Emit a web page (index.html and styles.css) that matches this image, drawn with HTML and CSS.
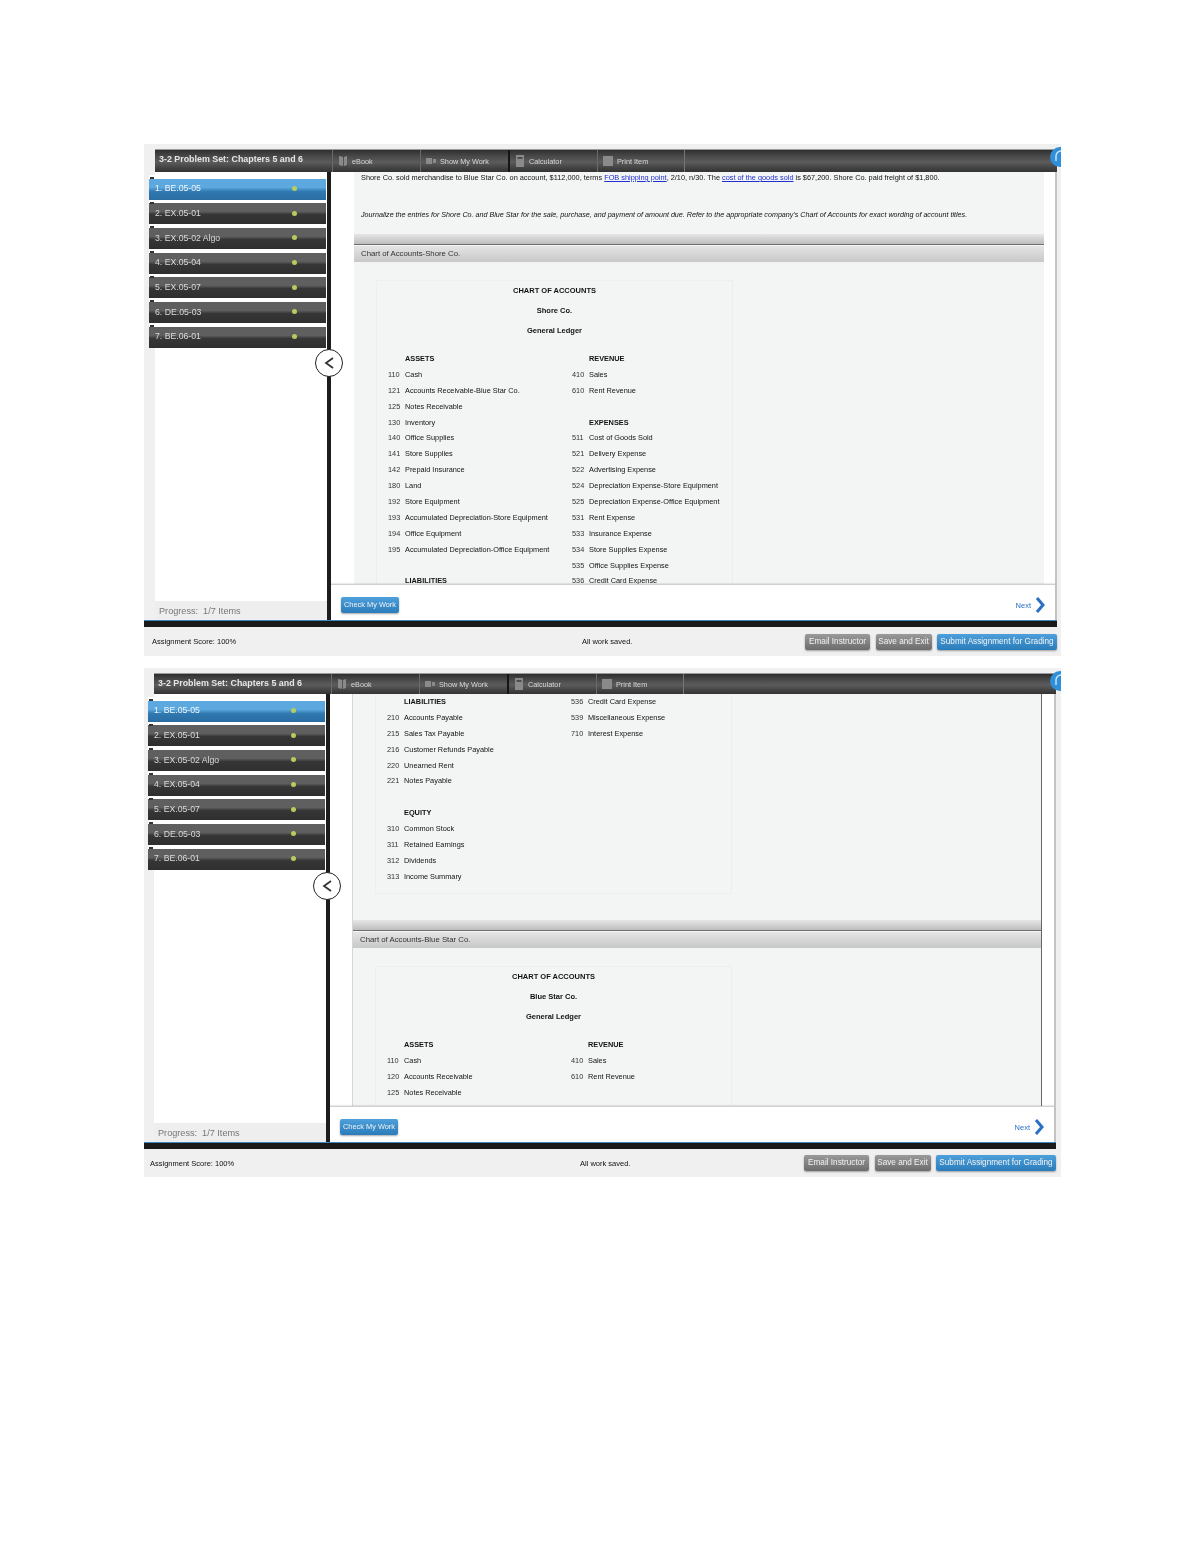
FILE: index.html
```html
<!DOCTYPE html>
<html lang="en">
<head>
<meta charset="utf-8">
<title>3-2 Problem Set: Chapters 5 and 6</title>
<link rel="stylesheet" href="styles.css">
</head>
<body>
<section class="panel panel-first">
  <svg class="help" viewBox="0 0 20 20"><circle cx="10" cy="10" r="10" fill="#2f8fd8"/><path d="M6 14V9a5 5 0 0 1 10 0" fill="none" stroke="#cfe6f7" stroke-width="1.4"/></svg>
  <header class="topbar">
    <h1 class="title">3-2 Problem Set: Chapters 5 and 6</h1>
    <div class="tool"><svg class="tool-icon" viewBox="0 0 10 12"><path d="M1 1l4 1v9l-4-1zM6 2l3-1v9l-3 1z" fill="#8a8a8a"/></svg>eBook</div>
    <div class="tool tool-dark"><svg class="tool-icon" viewBox="0 0 10 12"><path d="M0 3h6v6H0zM7 4h3v4H7z" fill="#8a8a8a"/></svg>Show My Work</div>
    <div class="tool"><svg class="tool-icon" viewBox="0 0 10 12"><path fill-rule="evenodd" d="M1 0h8v12H1zM2.500 2v2h5V2z" fill="#8a8a8a"/></svg>Calculator</div>
    <div class="tool tool-dark"><svg class="tool-icon" viewBox="0 0 10 12"><path d="M0 1h10v10H0z" fill="#8a8a8a"/></svg>Print Item</div>
  </header>
  <div class="workspace">
    <aside class="sidebar">
      <ol class="items">
        <li class="item item-active"><span>1. BE.05-05</span><i class="dot"></i></li>
        <li class="item"><span>2. EX.05-01</span><i class="dot"></i></li>
        <li class="item"><span>3. EX.05-02 Algo</span><i class="dot"></i></li>
        <li class="item"><span>4. EX.05-04</span><i class="dot"></i></li>
        <li class="item"><span>5. EX.05-07</span><i class="dot"></i></li>
        <li class="item"><span>6. DE.05-03</span><i class="dot"></i></li>
        <li class="item"><span>7. BE.06-01</span><i class="dot"></i></li>
      </ol>
      <div class="progress">Progress:&nbsp; 1/7 Items</div>
    </aside>
    <div class="divider">
      <button class="collapse" aria-label="Collapse"><svg viewBox="0 0 12 14" width="12" height="14"><path d="M10 2L3 7l7 5" fill="none" stroke="#333" stroke-width="1.800"/></svg></button>
    </div>
    <main class="main">
      <div class="viewport">
        <div class="doc">
          <p class="para">Shore Co. sold merchandise to Blue Star Co. on account, $112,000, terms <a href="#">FOB shipping point</a>, 2/10, n/30. The <a href="#">cost of the goods sold</a> is $67,200. Shore Co. paid freight of $1,800.</p>
          <p class="para para-italic">Journalize the entries for Shore Co. and Blue Star for the sale, purchase, and payment of amount due. Refer to the appropriate company's Chart of Accounts for exact wording of account titles.</p>
          <div class="rule"></div>
          <h2 class="section">Chart of Accounts-Shore Co.</h2>
          <div class="chart">
            <div class="chart-head"><b>CHART OF ACCOUNTS</b><b>Shore Co.</b><b>General Ledger</b></div>
            <div class="cols">
              <div class="col col-left">
                <div class="row row-head">ASSETS</div>
                <div class="row"><span class="no">110</span>Cash</div>
                <div class="row"><span class="no">121</span>Accounts Receivable-Blue Star Co.</div>
                <div class="row"><span class="no">125</span>Notes Receivable</div>
                <div class="row"><span class="no">130</span>Inventory</div>
                <div class="row"><span class="no">140</span>Office Supplies</div>
                <div class="row"><span class="no">141</span>Store Supplies</div>
                <div class="row"><span class="no">142</span>Prepaid Insurance</div>
                <div class="row"><span class="no">180</span>Land</div>
                <div class="row"><span class="no">192</span>Store Equipment</div>
                <div class="row"><span class="no">193</span>Accumulated Depreciation-Store Equipment</div>
                <div class="row"><span class="no">194</span>Office Equipment</div>
                <div class="row"><span class="no">195</span>Accumulated Depreciation-Office Equipment</div>
                <div class="row"></div>
                <div class="row row-head">LIABILITIES</div>
              </div>
              <div class="col">
                <div class="row row-head">REVENUE</div>
                <div class="row"><span class="no">410</span>Sales</div>
                <div class="row"><span class="no">610</span>Rent Revenue</div>
                <div class="row"></div>
                <div class="row row-head">EXPENSES</div>
                <div class="row"><span class="no">511</span>Cost of Goods Sold</div>
                <div class="row"><span class="no">521</span>Delivery Expense</div>
                <div class="row"><span class="no">522</span>Advertising Expense</div>
                <div class="row"><span class="no">524</span>Depreciation Expense-Store Equipment</div>
                <div class="row"><span class="no">525</span>Depreciation Expense-Office Equipment</div>
                <div class="row"><span class="no">531</span>Rent Expense</div>
                <div class="row"><span class="no">533</span>Insurance Expense</div>
                <div class="row"><span class="no">534</span>Store Supplies Expense</div>
                <div class="row"><span class="no">535</span>Office Supplies Expense</div>
                <div class="row"><span class="no">536</span>Credit Card Expense</div>
              </div>
            </div>
          </div>
        </div>
      </div>
      <div class="actions">
        <button class="btn btn-blue">Check My Work</button>
        <a class="next" href="#">Next<svg viewBox="0 0 10 16" width="10" height="16"><path d="M2 1l6 7-6 7" fill="none" stroke="#2a70c4" stroke-width="3"/></svg></a>
      </div>
    </main>
  </div>
  <div class="rail"></div>
  <footer class="foot">
    <span>Assignment Score: 100%</span>
    <span>All work saved.</span>
    <div class="foot-btns">
      <button class="btn btn-gray btn-email">Email Instructor</button>
      <button class="btn btn-gray btn-save">Save and Exit</button>
      <button class="btn btn-blue btn-submit">Submit Assignment for Grading</button>
    </div>
  </footer>
</section>

<section class="panel panel-second">
  <svg class="help" viewBox="0 0 20 20"><circle cx="10" cy="10" r="10" fill="#2f8fd8"/><path d="M6 14V9a5 5 0 0 1 10 0" fill="none" stroke="#cfe6f7" stroke-width="1.4"/></svg>
  <header class="topbar">
    <h1 class="title">3-2 Problem Set: Chapters 5 and 6</h1>
    <div class="tool"><svg class="tool-icon" viewBox="0 0 10 12"><path d="M1 1l4 1v9l-4-1zM6 2l3-1v9l-3 1z" fill="#8a8a8a"/></svg>eBook</div>
    <div class="tool tool-dark"><svg class="tool-icon" viewBox="0 0 10 12"><path d="M0 3h6v6H0zM7 4h3v4H7z" fill="#8a8a8a"/></svg>Show My Work</div>
    <div class="tool"><svg class="tool-icon" viewBox="0 0 10 12"><path fill-rule="evenodd" d="M1 0h8v12H1zM2.500 2v2h5V2z" fill="#8a8a8a"/></svg>Calculator</div>
    <div class="tool"><svg class="tool-icon" viewBox="0 0 10 12"><path d="M0 1h10v10H0z" fill="#8a8a8a"/></svg>Print Item</div>
  </header>
  <div class="workspace">
    <aside class="sidebar">
      <ol class="items">
        <li class="item item-active"><span>1. BE.05-05</span><i class="dot"></i></li>
        <li class="item"><span>2. EX.05-01</span><i class="dot"></i></li>
        <li class="item"><span>3. EX.05-02 Algo</span><i class="dot"></i></li>
        <li class="item"><span>4. EX.05-04</span><i class="dot"></i></li>
        <li class="item"><span>5. EX.05-07</span><i class="dot"></i></li>
        <li class="item"><span>6. DE.05-03</span><i class="dot"></i></li>
        <li class="item"><span>7. BE.06-01</span><i class="dot"></i></li>
      </ol>
      <div class="progress">Progress:&nbsp; 1/7 Items</div>
    </aside>
    <div class="divider">
      <button class="collapse" aria-label="Collapse"><svg viewBox="0 0 12 14" width="12" height="14"><path d="M10 2L3 7l7 5" fill="none" stroke="#333" stroke-width="1.800"/></svg></button>
    </div>
    <main class="main">
      <div class="viewport">
        <div class="doc">
          <div class="chart chart-continued">
            <div class="cols">
              <div class="col col-left">
                <div class="row row-head">LIABILITIES</div>
                <div class="row"><span class="no">210</span>Accounts Payable</div>
                <div class="row"><span class="no">215</span>Sales Tax Payable</div>
                <div class="row"><span class="no">216</span>Customer Refunds Payable</div>
                <div class="row"><span class="no">220</span>Unearned Rent</div>
                <div class="row"><span class="no">221</span>Notes Payable</div>
                <div class="row"></div>
                <div class="row row-head">EQUITY</div>
                <div class="row"><span class="no">310</span>Common Stock</div>
                <div class="row"><span class="no">311</span>Retained Earnings</div>
                <div class="row"><span class="no">312</span>Dividends</div>
                <div class="row"><span class="no">313</span>Income Summary</div>
              </div>
              <div class="col">
                <div class="row"><span class="no">536</span>Credit Card Expense</div>
                <div class="row"><span class="no">539</span>Miscellaneous Expense</div>
                <div class="row"><span class="no">710</span>Interest Expense</div>
              </div>
            </div>
          </div>
          <div class="rule"></div>
          <h2 class="section">Chart of Accounts-Blue Star Co.</h2>
          <div class="chart">
            <div class="chart-head"><b>CHART OF ACCOUNTS</b><b>Blue Star Co.</b><b>General Ledger</b></div>
            <div class="cols">
              <div class="col col-left">
                <div class="row row-head">ASSETS</div>
                <div class="row"><span class="no">110</span>Cash</div>
                <div class="row"><span class="no">120</span>Accounts Receivable</div>
                <div class="row"><span class="no">125</span>Notes Receivable</div>
                <div class="row"><span class="no">130</span>Inventory</div>
              </div>
              <div class="col">
                <div class="row row-head">REVENUE</div>
                <div class="row"><span class="no">410</span>Sales</div>
                <div class="row"><span class="no">610</span>Rent Revenue</div>
                <div class="row"></div>
                <div class="row row-head">EXPENSES</div>
              </div>
            </div>
          </div>
        </div>
      </div>
      <div class="actions">
        <button class="btn btn-blue">Check My Work</button>
        <a class="next" href="#">Next<svg viewBox="0 0 10 16" width="10" height="16"><path d="M2 1l6 7-6 7" fill="none" stroke="#2a70c4" stroke-width="3"/></svg></a>
      </div>
    </main>
  </div>
  <div class="rail"></div>
  <footer class="foot">
    <span>Assignment Score: 100%</span>
    <span>All work saved.</span>
    <div class="foot-btns">
      <button class="btn btn-gray btn-email">Email Instructor</button>
      <button class="btn btn-gray btn-save">Save and Exit</button>
      <button class="btn btn-blue btn-submit">Submit Assignment for Grading</button>
    </div>
  </footer>
</section>
```

FILE: styles.css
```css
* { box-sizing: border-box; }

html, body { margin: 0; background: #fff; }

body {
  height: 1553px;
  padding: 144px 0 0 144px;
  font-family: "Liberation Sans", Arial, sans-serif;
  color: #111;
  overflow: hidden;
}

.panel {
  position: relative;
  width: 917px;
  padding: 5px 4px 0 11px;
  background: #f0f0f0;
  overflow: hidden;
  filter: blur(0.6px);
}

.panel-second {
  margin-top: 12px;
  padding-left: 10px;
  padding-right: 5px;
}

.help {
  position: absolute;
  top: 3px;
  right: -9px;
  width: 20px;
  height: 20px;
  z-index: 3;
}

/* top bar */
.topbar {
  display: flex;
  height: 23px;
  color: #e6e6e6;
  background: linear-gradient(#2f2f2f, #4a4a4a 30%, #5c5c5c 55%, #3f3f3f 85%, #343434);
  border-top: 1px solid #9a9a9a;
}

.panel-second .topbar { height: 21px; }

.title {
  width: 177px;
  margin: 0;
  padding: 0 0 0 4px;
  font-size: 8.9px;
  font-weight: 700;
  line-height: 18px;
  white-space: nowrap;
}

.tool {
  display: flex;
  align-items: center;
  gap: 4px;
  width: 88px;
  padding-left: 5px;
  font-size: 7.3px;
  color: #d8d8d8;
  border-left: 1px solid #6a6a6a;
}

.tool:nth-of-type(3) { width: 89px; }

.tool-dark + .tool { border-left: 2px solid #151515; }

.tool-dark:last-child { border-right: 2px solid #151515; }

.tool:last-child { border-right: 1px solid #777; }

.tool-icon { width: 10px; height: 12px; flex: none; }

/* workspace */
.workspace {
  display: flex;
  height: 448px;
}

.sidebar {
  display: flex;
  flex-direction: column;
  justify-content: space-between;
  width: 172px;
  background: #fff;
}

.items {
  margin: 3px 0 0 -6px;
  padding: 0;
  width: 177px;
  list-style: none;
}

.item {
  position: relative;
  display: flex;
  align-items: center;
  justify-content: space-between;
  height: 24.7px;
  padding: 3px 29px 1px 6px;
  font-size: 8.7px;
  color: #dcdcdc;
  background: linear-gradient(#5f5f5f, #5f5f5f 40%, #363636 55%, #2f2f2f) no-repeat 0 3.7px / 100% 21px #fff;
}

.item::before {
  content: "";
  position: absolute;
  top: 2px;
  left: 1px;
  width: 4px;
  height: 2px;
  background: #333;
}

.item-active {
  color: #f2f7fb;
  background: linear-gradient(#5da8df, #5da8df 40%, #2f78b0 60%, #2a6da3) no-repeat 0 3.7px / 100% 21px #fff;
}

.dot {
  width: 5px;
  height: 5px;
  border-radius: 50%;
  background: #b6cc5c;
}

.progress {
  height: 19px;
  padding: 3px 0 0 4px;
  font-size: 9.15px;
  line-height: 14px;
  color: #777;
  background: #eee;
}

.divider {
  position: relative;
  flex: none;
  width: 4px;
  background: #1d1d1d;
}

.collapse {
  position: absolute;
  top: 177px;
  left: -12.500px;
  display: flex;
  align-items: center;
  justify-content: center;
  width: 28px;
  height: 28px;
  padding: 0;
  background: #fff;
  border: 1.500px solid #222;
  border-radius: 50%;
}

.panel-second .collapse { top: 178px; left: -13px; }

.main {
  display: flex;
  flex-direction: column;
  flex: 1;
  min-width: 0;
  background: #fff;
  border-right: 2px solid #c4c4c4;
}

.viewport {
  height: 412px;
  padding: 0 11px 0 23px;
  overflow: hidden;
}

.panel-second .viewport { padding: 0 12px 0 22px; }

.doc {
  height: 100%;
  background: #f3f5f4;
  overflow: hidden;
}

.panel-second .doc {
  border-left: 1px solid #d6d6d6;
  border-right: 1px solid #666;
}

.para {
  height: 36px;
  margin: 0;
  padding: 1px 0 0 7px;
  font-size: 7.35px;
  line-height: 10px;
  white-space: nowrap;
}

.para a { color: #1f2fd0; text-decoration: underline; }

.para-italic {
  height: 26px;
  padding-top: 2px;
  font-style: italic;
  font-size: 7.17px;
}

.rule {
  height: 11px;
  background: linear-gradient(#e6e6e6, #bdbdbd);
  border-bottom: 1px solid #6e6e6e;
}

.section {
  height: 16px;
  margin: 1px 0 0;
  padding-left: 7px;
  font-size: 7.8px;
  font-weight: 400;
  line-height: 16px;
  color: #333;
  background: linear-gradient(#e4e4e4, #c8c8c8);
}

.chart {
  width: 357px;
  margin: 18px 0 0 22px;
  border: 1px solid #edefee;
}

.chart-continued {
  height: 201px;
  margin-top: -1px;
  margin-bottom: 26px;
}

.chart-head {
  display: flex;
  flex-direction: column;
  align-items: center;
  height: 70px;
  font-size: 7.500px;
  line-height: 20px;
}

.cols {
  display: flex;
  padding-left: 11px;
}

.col { font-size: 7.35px; }

.col-left { width: 184px; flex: none; }

.row {
  display: flex;
  height: 15.9px;
  line-height: 16px;
  white-space: nowrap;
}

.no { width: 17px; flex: none; color: #333; }

.row-head {
  padding-left: 17px;
  font-weight: 700;
}

/* bottom actions */
.actions {
  display: flex;
  align-items: center;
  justify-content: space-between;
  flex: 1;
  padding: 5px 10px 0;
  border-top: 1px solid #d0d0d0;
  box-shadow: 0 -1px 1px rgba(0, 0, 0, .08);
}

.btn {
  height: 16px;
  padding: 0;
  font-family: inherit;
  font-size: 8.2px;
  line-height: 16px;
  color: #f2f2f2;
  border: 0;
  border-radius: 2px;
  box-shadow: 0 1px 2px rgba(0, 0, 0, .35);
}

.btn-blue { width: 58px; font-size: 7.4px; background: linear-gradient(#4da0dc, #2b7cba); }

.btn-gray { background: linear-gradient(#9a9a9a, #6c6c6c); }

.btn-email { width: 65px; }

.btn-save { width: 56px; }

.btn-submit { width: 120px; font-size: 8.2px; }

.next {
  display: flex;
  align-items: center;
  gap: 4px;
  font-size: 7.500px;
  color: #2a70c4;
  text-decoration: none;
}

.rail {
  height: 7px;
  margin-left: -11px;
  background: #1a1a1a;
  border-top: 1.500px solid #3c86bf;
}

.panel-second .rail { margin-left: -10px; }

.foot {
  display: grid;
  grid-template-columns: 430px 1fr auto;
  align-items: center;
  height: 29px;
  margin: 0 -4px 0 -3px;
  padding-right: 4px;
  font-size: 7.500px;
  background: #f0f0f0;
}

.panel-second .foot {
  height: 28px;
  margin: 0 -5px 0 -4px;
  padding-right: 5px;
}

.foot-btns {
  display: flex;
  gap: 5.500px;
}
```
